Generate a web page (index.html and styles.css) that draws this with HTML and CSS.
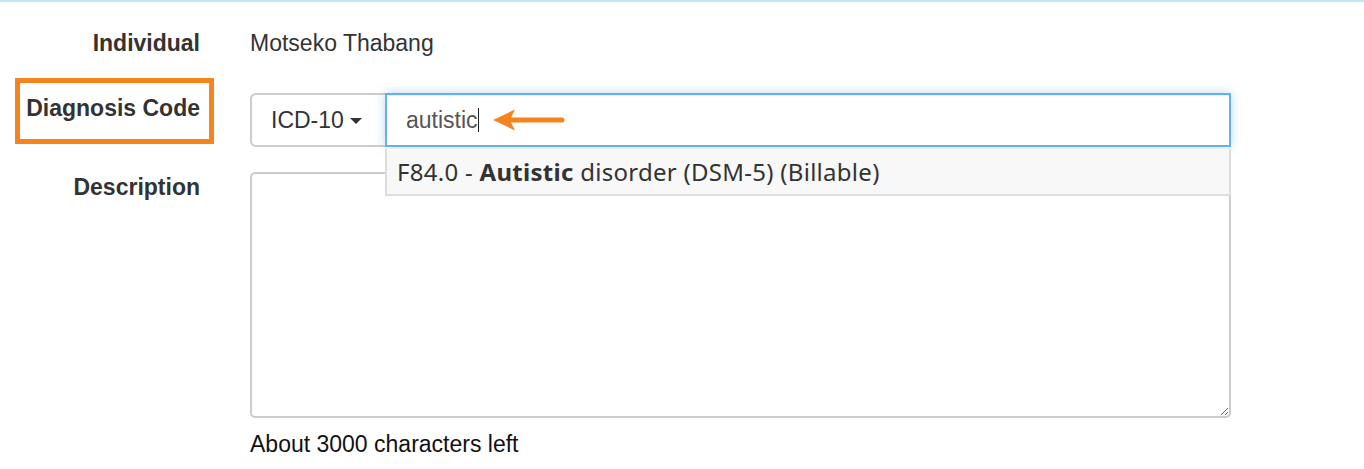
FILE: index.html
```html
<!DOCTYPE html>
<html>
<head>
<meta charset="utf-8">
<link rel="stylesheet" href="styles.css">
</head>
<body>
<div class="topline"></div>
<form class="form">
  <div class="row row-individual">
    <div class="label">Individual</div>
    <div class="static">Motseko Thabang</div>
  </div>
  <div class="row row-code">
    <div class="label"><span class="annotated">Diagnosis Code</span></div>
    <div class="field">
      <div class="input-group">
        <div class="btn-type">ICD-10 <span class="caret"></span></div>
        <div class="input">autistic<span class="cursor"></span>
          <svg class="arrow" width="74" height="22" viewBox="0 0 74 22">
            <path d="M0 11 L22 0.5 L18 8.5 L69 8.5 A2.5 2.5 0 0 1 69 13.5 L18 13.5 L22 21.5 Z" fill="#f5841f"/>
          </svg>
        </div>
      </div>
      <div class="suggest">F84.0 - <b>Autistic</b> disorder (DSM-5) (Billable)</div>
    </div>
  </div>
  <div class="row row-desc">
    <div class="label">Description</div>
    <div class="field">
      <textarea class="textarea"></textarea>
      <div class="help">About 3000 characters left</div>
    </div>
  </div>
</form>
</body>
</html>
```

FILE: styles.css
```css
html, body {
  margin: 0;
  padding: 0;
  background: #fff;
}
body {
  font-family: "Liberation Sans", Arial, sans-serif;
  font-size: 23px;
  color: #333;
  width: 1364px;
  height: 469px;
  overflow: hidden;
}
.topline {
  height: 2px;
  background: #b9e8f1;
}
.form {
  display: flex;
  flex-direction: column;
  padding-top: 28px;
}
.row {
  display: grid;
  grid-template-columns: 200px 981px;
  column-gap: 50px;
  align-items: start;
}
.label {
  font-weight: bold;
  text-align: right;
  line-height: 26px;
  color: #333;
}
.row-code {
  margin-top: 37px;
}
.row-code .label,
.row-desc .label {
  padding-top: 2px;
}
.static {
  line-height: 26px;
  color: #333;
}
.annotated {
  position: relative;
  display: inline-block;
}
.annotated::before {
  content: "";
  position: absolute;
  left: -11px;
  top: -17px;
  right: -14px;
  bottom: -23px;
  border: 5px solid #f5841f;
}
.field {
  position: relative;
}
.input-group {
  display: flex;
  height: 54px;
}
.btn-type {
  box-sizing: border-box;
  width: 135px;
  height: 54px;
  border: 2px solid #ccc;
  border-right: none;
  border-radius: 6px 0 0 6px;
  display: flex;
  align-items: center;
  padding-left: 19px;
  color: #333;
  gap: 6px;
}
.caret {
  width: 0;
  height: 0;
  border-left: 6px solid transparent;
  border-right: 6px solid transparent;
  border-top: 6px solid #333;
  margin-top: 2px;
}
.input {
  position: relative;
  flex: 1;
  box-sizing: border-box;
  height: 54px;
  border: 2px solid #66afe9;
  box-shadow: inset 0 1px 1px rgba(0,0,0,.075), 0 0 10px rgba(102,175,233,.45);
  display: flex;
  align-items: center;
  padding-left: 19px;
  color: #555;
}
.cursor {
  display: inline-block;
  width: 1px;
  height: 24px;
  background: #222;
}
.arrow {
  position: absolute;
  left: 106px;
  top: 14px;
}
.suggest {
  position: absolute;
  left: 135px;
  right: 0;
  top: 56px;
  height: 47px;
  box-sizing: border-box;
  background: #f8f8f8;
  border: 2px solid #ddd;
  border-top: none;
  font-family: "Noto Sans", "Open Sans", sans-serif;
  font-size: 24px;
  letter-spacing: 0.28px;
  color: #333;
  display: flex;
  align-items: center;
  padding-left: 10px;
  z-index: 2;
  white-space: pre;
}
.suggest b {
  font-weight: bold;
}
.row-desc {
  margin-top: 25px;
}
.textarea {
  display: block;
  box-sizing: border-box;
  width: 981px;
  height: 246px;
  margin: 0;
  border: 2px solid #ccc;
  border-radius: 5px;
  resize: vertical;
  font: inherit;
}
.help {
  margin-top: 13px;
  line-height: 26px;
  color: #111;
}
```
